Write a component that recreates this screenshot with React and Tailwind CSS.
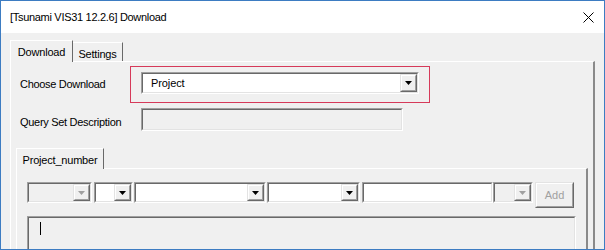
import React from 'react'

const ui = { fontFamily: '"Liberation Sans", Arial, sans-serif' }

function Arrow({ disabled }) {
  return (
    <svg width="7" height="4" viewBox="0 0 7 4">
      <path d="M0 0h7L3.5 4z" fill={disabled ? '#a0a0a0' : '#000'} />
    </svg>
  )
}

function Sunken({ className = '', bg = 'bg-white', children }) {
  return (
    <div className={`border-t border-l border-b border-r border-t-[#a0a0a0] border-l-[#a0a0a0] border-b-white border-r-white ${className}`}>
      <div className={`h-full w-full border-t border-l border-b border-r border-t-[#696969] border-l-[#696969] border-b-[#e3e3e3] border-r-[#e3e3e3] ${bg} flex`}>
        {children}
      </div>
    </div>
  )
}

function Raised({ className = '', children }) {
  return (
    <div className={`border-t border-l border-b border-r border-t-[#e3e3e3] border-l-[#e3e3e3] border-b-[#696969] border-r-[#696969] ${className}`}>
      <div className="h-full w-full border-t border-l border-b border-r border-t-white border-l-white border-b-[#a0a0a0] border-r-[#a0a0a0] bg-[#f0f0f0] flex items-center justify-center">
        {children}
      </div>
    </div>
  )
}

function Combo({ className, disabled, text }) {
  return (
    <Sunken className={className} bg={disabled ? 'bg-[#f0f0f0]' : 'bg-white'}>
      <div className="flex-1 flex items-center pl-[8px] text-[11px] tracking-[-0.1px] text-black">{text}</div>
      <Raised className="w-[17px] h-full">
        <Arrow disabled={disabled} />
      </Raised>
    </Sunken>
  )
}

export default function App() {
  return (
    <div className="w-[605px] h-[250px] overflow-hidden border border-[#3d7cc2] flex flex-col bg-[#f0f0f0]" style={ui}>
      <div className="h-[32px] bg-white flex items-center justify-between pl-[9px] pr-[10px] shrink-0">
        <span className="text-[11px] tracking-[-0.3px] text-black leading-none">[Tsunami VIS31 12.2.6] Download</span>
        <svg width="11" height="11" viewBox="0 0 11 11">
          <path d="M0.5 0.5l10 10M10.5 0.5l-10 10" stroke="#000" strokeWidth="1" />
        </svg>
      </div>

      <div className="flex-1 flex flex-col pl-[9px] pt-[7px]">
        <div className="flex items-end h-[21px]">
          <div className="relative z-10 -mb-px h-[22px] w-[63px] bg-[#f0f0f0] border-t border-l border-r border-t-white border-l-white border-r-[#696969] flex items-start justify-center pt-[3px] text-[11px] tracking-[-0.2px] text-black">
            Download
          </div>
          <div className="h-[19px] w-[50px] border-t border-r border-t-white border-r-[#696969] flex items-start justify-center pt-[3px] text-[11px] tracking-[-0.2px] text-black">
            Settings
          </div>
        </div>

        <div className="w-[585px] flex-1 border-t border-l border-r-2 border-t-white border-l-white border-r-[#8a8a8a] flex flex-col">
          <div className="flex items-center mt-[4px] ml-[9px]">
            <span className="w-[110px] text-[11px] tracking-[-0.3px] text-black">Choose Download</span>
            <div className="w-[300px] h-[37px] border border-[#d63a5a] pl-[10px] pt-[5px]">
              <Combo className="w-[278px] h-[22px]" text="Project" />
            </div>
          </div>

          <div className="flex items-center mt-[5px] ml-[9px]">
            <span className="w-[121px] pt-[6px] text-[11px] tracking-[-0.3px] text-black">Query Set Description</span>
            <Sunken className="w-[262px] h-[23px]" bg="bg-[#f0f0f0]" />
          </div>

          <div className="ml-[5px] mt-[17px] flex flex-col flex-1">
            <div className="flex items-end h-[20px]">
              <div className="relative z-10 -mb-px h-[21px] w-[88px] bg-[#f0f0f0] border-t border-l border-r border-t-white border-l-white border-r-[#696969] flex items-start justify-center pt-[3px] text-[11px] tracking-[-0.2px] text-black">
                Project_number
              </div>
            </div>
            <div className="w-[572px] flex-1 border-t border-l border-r-2 border-t-white border-l-white border-r-[#8a8a8a] flex flex-col">
              <div className="flex items-start mt-[13px] ml-[10px]">
                <Combo className="w-[65px] h-[21px]" disabled />
                <Combo className="w-[39px] h-[21px] ml-[2px]" />
                <Combo className="w-[132px] h-[21px] ml-[1px]" />
                <Combo className="w-[93px] h-[21px] ml-[1px]" />
                <Sunken className="w-[131px] h-[21px] ml-[2px]" />
                <Combo className="w-[40px] h-[21px]" disabled />
                <Raised className="w-[39px] h-[26px] ml-[2px]">
                  <span className="text-[11px] text-[#a0a0a0]">Add</span>
                </Raised>
              </div>
              <div className="ml-[10px] mt-[8px] w-[549px] flex-1">
                <Sunken className="w-full h-[60px]" bg="bg-[#f0f0f0]">
                  <div className="ml-[11px] mt-[4px] w-px h-[13px] bg-black" />
                </Sunken>
              </div>
            </div>
          </div>
        </div>
      </div>
    </div>
  )
}
